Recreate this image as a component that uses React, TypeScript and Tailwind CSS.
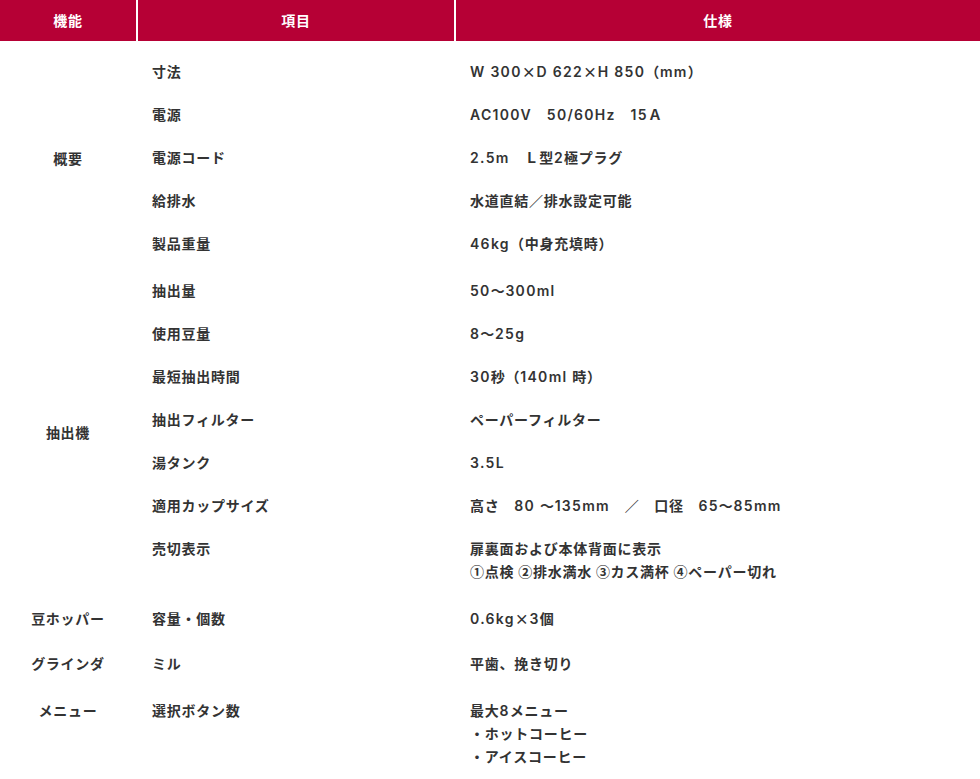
import React from "react";

type Row = { item: string; spec: string[] };
type Group = { label: string; rows: Row[]; top?: boolean; pb?: string };

const groups: Group[] = [
  {
    label: "概要",
    rows: [
      { item: "寸法", spec: ["W 300×D 622×H 850（mm）"] },
      { item: "電源", spec: ["AC100V　50/60Hz　15Ａ"] },
      { item: "電源コード", spec: ["2.5m　Ｌ型2極プラグ"] },
      { item: "給排水", spec: ["水道直結／排水設定可能"] },
      { item: "製品重量", spec: ["46kg（中身充填時）"] },
    ],
  },
  {
    label: "抽出機",
    rows: [
      { item: "抽出量", spec: ["50〜300ml"] },
      { item: "使用豆量", spec: ["8〜25g"] },
      { item: "最短抽出時間", spec: ["30秒（140ml 時）"] },
      { item: "抽出フィルター", spec: ["ペーパーフィルター"] },
      { item: "湯タンク", spec: ["3.5L"] },
      { item: "適用カップサイズ", spec: ["高さ　80 〜135mm　／　口径　65〜85mm"] },
      {
        item: "売切表示",
        spec: ["扉裏面および本体背面に表示", "①点検 ②排水満水 ③カス満杯 ④ペーパー切れ"],
      },
    ],
  },
  { label: "豆ホッパー", pb: "pb-[10px]", rows: [{ item: "容量・個数", spec: ["0.6kg×3個"] }] },
  { label: "グラインダ", rows: [{ item: "ミル", spec: ["平歯、挽き切り"] }] },
  {
    label: "メニュー",
    top: true,
    rows: [{ item: "選択ボタン数", spec: ["最大8メニュー", "・ホットコーヒー", "・アイスコーヒー"] }],
  },
];

function Mixed({ text }: { text: string }) {
  const parts = text.match(/[A-Za-z0-9./ ]+|[^A-Za-z0-9./ ]+/g) ?? [];
  return (
    <>
      {parts.map((p, i) =>
        /^[A-Za-z0-9./ ]+$/.test(p) && /[A-Za-z0-9]/.test(p) ? (
          <span key={i} className="font-['Inter'] font-semibold tracking-[1.3px]">
            {p}
          </span>
        ) : (
          <span key={i}>{p}</span>
        )
      )}
    </>
  );
}

export default function App() {
  return (
    <div
      className="w-[980px] bg-white text-[#333] text-[14px] leading-[23px] tracking-[0.75px] font-bold"
      style={{ fontFamily: '"Noto Sans CJK JP", "Noto Sans", sans-serif' }}
    >
      <table className="w-[980px] table-fixed border-separate border-spacing-0">
        <colgroup>
          <col className="w-[136px]" />
          <col className="w-[318px]" />
          <col className="w-[526px]" />
        </colgroup>
        <thead>
          <tr className="bg-[#b60035] text-white">
            <th className="h-[41px] p-0 text-center font-bold align-middle">機能</th>
            <th className="h-[41px] p-0 text-center font-bold align-middle border-l-2 border-white">項目</th>
            <th className="h-[41px] p-0 text-center font-bold align-middle border-l-2 border-white">仕様</th>
          </tr>
        </thead>
        {groups.map((g, gi) => (
          <tbody key={gi}>
            {g.rows.map((r, ri) => {
              const first = ri === 0;
              const last = ri === g.rows.length - 1;
              const pt = first ? (gi === 0 ? "pt-[19px]" : "pt-[12px]") : "pt-[10px]";
              const pb = last ? g.pb ?? "pb-[12px]" : "pb-[10px]";
              return (
                <tr key={ri}>
                  {first && (
                    <td
                      rowSpan={g.rows.length}
                      className={`text-center ${g.top ? "align-top" : "align-middle"} ${pt} ${pb} px-0`}
                    >
                      {g.label}
                    </td>
                  )}
                  <td className={`align-top pl-[16px] ${pt} ${pb}`}>{r.item}</td>
                  <td className={`align-top pl-[16px] ${pt} ${pb}`}>
                    {r.spec.map((s, si) => (
                      <div key={si}>
                        <Mixed text={s} />
                      </div>
                    ))}
                  </td>
                </tr>
              );
            })}
          </tbody>
        ))}
      </table>
    </div>
  );
}
